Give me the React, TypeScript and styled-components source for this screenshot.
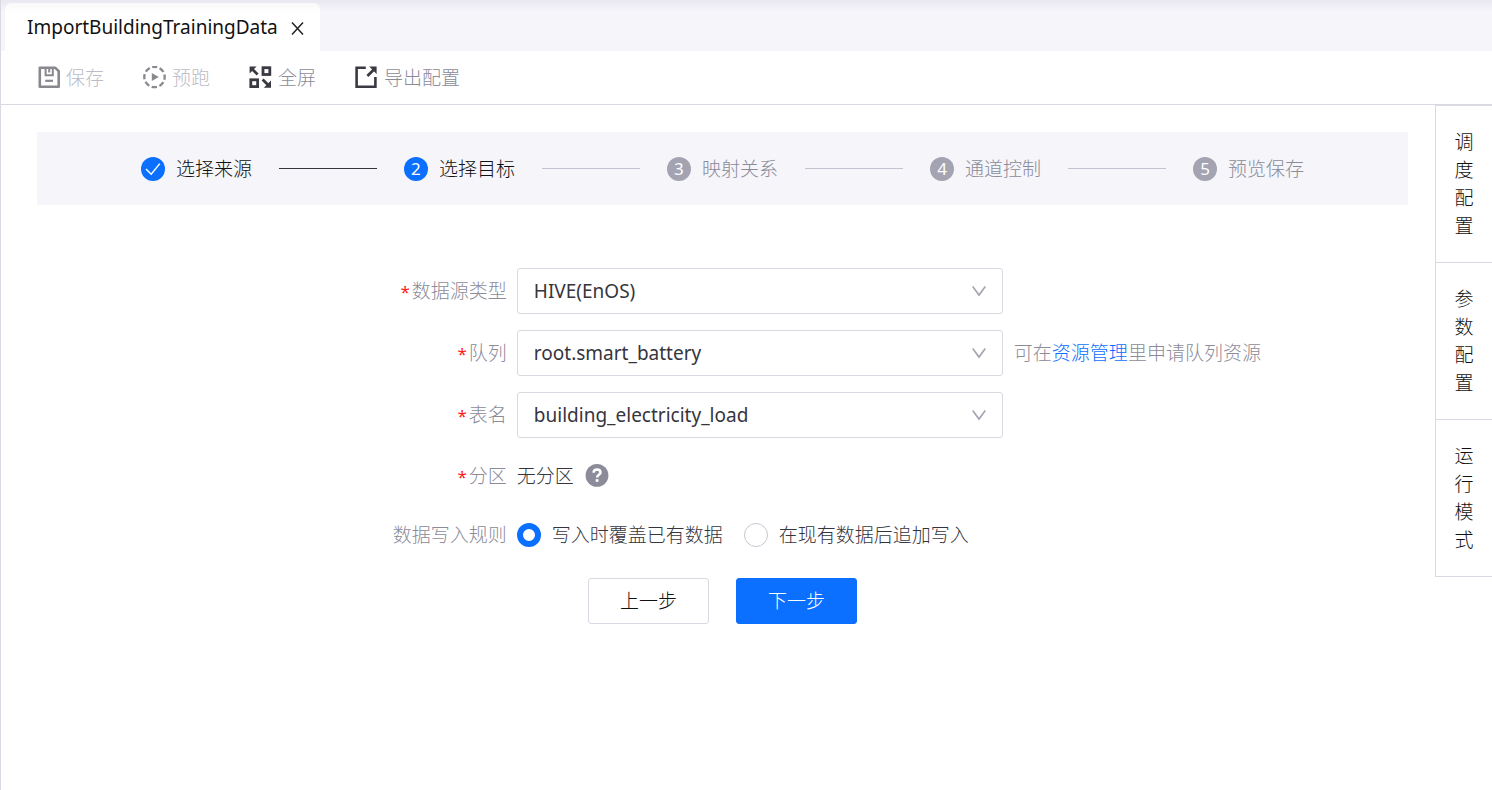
import React, { useState } from 'react';
import styled, { createGlobalStyle } from 'styled-components';

const blue = '#0b6fff';
const line = '#d9d9e2';
const muted = '#8b8b99';
const dark = '#35353d';
const panel = '#f5f5fa';

const GlobalStyle = createGlobalStyle`
  *, *::before, *::after { box-sizing: border-box; }
  body {
    margin: 0;
    background: #fff;
    color: #111;
    font-family: 'Noto Sans', 'Noto Sans CJK SC', sans-serif;
    font-size: 19px;
    line-height: 28px;
    font-weight: 300;
  }
  button, select, input { font: inherit; color: inherit; margin: 0; }
  button { border: 0; padding: 0; background: none; cursor: pointer; }
`;

const Page = styled.div`
  min-height: 100vh;
  display: flex;
  flex-direction: column;
  border-left: 1px solid ${line};
`;

const TabBar = styled.header`
  display: flex;
  align-items: flex-end;
  height: 51px;
  padding-left: 4px;
  background: linear-gradient(#e9e8f0, ${panel} 12px);
`;

const Tab = styled.div`
  display: flex;
  align-items: center;
  gap: 13px;
  height: 48px;
  padding: 0 16px 0 22px;
  border-radius: 6px 6px 0 0;
  background: linear-gradient(#f9f9fb, #fff 10px);
  font-weight: 400;
`;

const CloseButton = styled.button`
  display: flex;
  padding-top: 3px;
`;

const Toolbar = styled.nav`
  display: flex;
  align-items: center;
  gap: 39px;
  height: 54px;
  padding-left: 36px;
  border-bottom: 1px solid ${line};
`;

const Tool = styled.button`
  display: flex;
  align-items: center;
  gap: 6px;
  color: ${muted};
  svg { color: #3a3a42; }
  &:disabled { color: #bcbbc8; cursor: default; }
  &:disabled svg { color: #88888e; }
`;

const Body = styled.div`
  flex: 1;
  display: flex;
  align-items: flex-start;
`;

const Main = styled.main`
  flex: 1;
  min-width: 0;
  padding: 27px 27px 27px 36px;
`;

const Steps = styled.ol`
  display: flex;
  align-items: center;
  justify-content: center;
  gap: 27px;
  height: 73px;
  margin: 0;
  padding: 0;
  list-style: none;
  background: ${panel};
`;

const Step = styled.li<{ $reached: boolean }>`
  display: flex;
  align-items: center;
  gap: 11px;
  white-space: nowrap;
  color: ${p => (p.$reached ? '#111' : muted)};
`;

const StepMark = styled.span<{ $reached: boolean }>`
  display: flex;
  align-items: center;
  justify-content: center;
  width: 24px;
  height: 24px;
  border-radius: 50%;
  background: ${p => (p.$reached ? blue : '#a3a3b1')};
  color: #fff;
  font-size: 17px;
  font-weight: 400;
  line-height: 24px;
`;

const StepLine = styled.li<{ $done: boolean }>`
  width: 98px;
  height: 1px;
  background: ${p => (p.$done ? '#35353d' : '#c3c3d0')};
`;

const Form = styled.form`
  display: flex;
  flex-direction: column;
  gap: 16px;
  padding-top: 63px;
`;

const Row = styled.div`
  display: flex;
  align-items: center;
`;

const LabelCell = styled.div`
  width: 35%;
  padding-right: 10px;
  text-align: right;
  color: ${muted};
`;

const Star = styled.span`
  margin-right: 2px;
  color: #ff1a1a;
  font-size: 17px;
  font-weight: 400;
`;

const SelectBox = styled.div`
  display: grid;
  align-items: center;
  width: 486px;
  > * { grid-area: 1 / 1; }
  svg { justify-self: end; margin-right: 17px; pointer-events: none; }
`;

const Select = styled.select`
  appearance: none;
  width: 100%;
  height: 46px;
  padding: 0 40px 0 16px;
  border: 1px solid ${line};
  border-radius: 3px;
  background: #fff;
  color: ${dark};
  font-weight: 400;
`;

const Hint = styled.span`
  margin-left: 11px;
  color: ${muted};
`;

const Link = styled.a`
  color: ${blue};
  text-decoration: none;
`;

const Value = styled.div`
  display: flex;
  align-items: center;
  gap: 11px;
  height: 44px;
  color: ${dark};
`;

const HelpButton = styled.button`
  display: flex;
`;

const Choices = styled.div`
  display: flex;
  align-items: center;
  gap: 21px;
  height: 42px;
`;

const Choice = styled.label`
  display: flex;
  align-items: center;
  gap: 11px;
  color: ${dark};
  cursor: pointer;
`;

const Radio = styled.input`
  appearance: none;
  width: 24px;
  height: 24px;
  border: 1px solid #c8c8d3;
  border-radius: 50%;
  background: #fff;
  &:checked { border: 6px solid ${blue}; }
`;

const Actions = styled.div`
  display: flex;
  justify-content: center;
  gap: 27px;
  padding-top: 6px;
`;

const ActionButton = styled.button<{ $primary?: boolean }>`
  height: 46px;
  padding: 0 31px;
  border: 1px solid ${p => (p.$primary ? blue : line)};
  border-radius: 3px;
  background: ${p => (p.$primary ? blue : '#fff')};
  color: ${p => (p.$primary ? '#fff' : '#111')};
`;

const Side = styled.aside`
  width: 57px;
  border-left: 1px solid ${line};
  border-top: 1px solid ${line};
`;

const SideButton = styled.button`
  display: block;
  width: 100%;
  padding: 22px 18px;
  border-bottom: 1px solid ${line};
  word-break: break-all;
`;

const SaveIcon = () => (
  <svg width="23" height="23" viewBox="0 0 23 23" fill="none" stroke="currentColor" strokeWidth="2.6" aria-hidden="true">
    <path d="M2.8 1.8H18.3L21.7 5.2V20.8H2.8Z" strokeLinejoin="round" />
    <path d="M8.6 2V9.2H15.8V2M12.2 2.5V6.5" strokeWidth="2" />
    <path d="M8.2 14.8H16" strokeWidth="2.2" />
  </svg>
);

const RunIcon = () => (
  <svg width="23" height="23" viewBox="0 0 23 23" fill="none" aria-hidden="true">
    <circle cx="11.5" cy="11" r="10.2" stroke="currentColor" strokeWidth="2.3" strokeDasharray="5.4 2.61" strokeDashoffset="2.7" transform="rotate(-90 11.5 11)" />
    <path d="M8.8 6.9L15.8 11L8.8 15.1Z" fill="currentColor" />
  </svg>
);

const FullIcon = () => (
  <svg width="23" height="23" viewBox="0 0 23 23" fill="none" stroke="currentColor" strokeWidth="2.8" aria-hidden="true">
    <rect x="14" y="1.7" width="6.8" height="6.8" />
    <rect x="1.8" y="13.8" width="6.8" height="6.8" />
    <path d="M3 3L8.6 8.4M13.6 13.4L19.6 19.4" />
    <path d="M.6 .4H7.6L.6 7.4ZM22 21.8V14.6L14.8 21.8Z" fill="currentColor" stroke="none" />
  </svg>
);

const ExportIcon = () => (
  <svg width="23" height="23" viewBox="0 0 23 23" fill="none" stroke="currentColor" strokeWidth="2.6" aria-hidden="true">
    <path d="M10.8 1.8H1.6V20.8H20.4V11" />
    <path d="M12.4 10L19.4 3" strokeWidth="2.8" />
    <path d="M14.2 .5H21.6V8Z" fill="currentColor" stroke="none" />
  </svg>
);

const CloseIcon = () => (
  <svg width="13" height="13" viewBox="0 0 13 13" stroke="#222" strokeWidth="1.5" aria-hidden="true">
    <path d="M1 .5L12 12.5M12 .5L1 12.5" />
  </svg>
);

const ChevronIcon = () => (
  <svg width="14" height="11" viewBox="0 0 14 11" fill="none" stroke="#a3a3b1" strokeWidth="1.6" aria-hidden="true">
    <path d="M.7 .6L7 9.1L13.3 .6" />
  </svg>
);

const CheckIcon = () => (
  <svg width="16" height="14" viewBox="0 0 16 14" fill="none" stroke="#fff" strokeWidth="1.5" aria-hidden="true">
    <path d="M1 7L6.2 12.2L14.8 1.6" />
  </svg>
);

const HelpIcon = () => (
  <svg width="24" height="24" viewBox="0 0 24 24" fill="none" aria-hidden="true">
    <circle cx="12" cy="11.4" r="11.4" fill="#8b8b99" />
    <path d="M8.6 8.8C8.6 6.6 10 5.5 12 5.5S15.5 6.7 15.5 8.5C15.5 10.8 12.1 10.9 12.1 13.6" stroke="#fff" strokeWidth="2.5" />
    <rect x="10.7" y="15.2" width="2.8" height="2.6" fill="#fff" />
  </svg>
);

const steps = ['选择来源', '选择目标', '映射关系', '通道控制', '预览保存'];
const current = 1;

const fields = [
  { id: 'type', label: '数据源类型', value: 'HIVE(EnOS)' },
  { id: 'queue', label: '队列', value: 'root.smart_battery' },
  { id: 'table', label: '表名', value: 'building_electricity_load' },
];

const rules = ['写入时覆盖已有数据', '在现有数据后追加写入'];

export default function App() {
  const [rule, setRule] = useState(0);
  return (
    <>
      <GlobalStyle />
      <Page>
        <TabBar>
          <Tab>
            ImportBuildingTrainingData
            <CloseButton type="button" aria-label="关闭"><CloseIcon /></CloseButton>
          </Tab>
        </TabBar>
        <Toolbar>
          <Tool type="button" disabled><SaveIcon />保存</Tool>
          <Tool type="button" disabled><RunIcon />预跑</Tool>
          <Tool type="button"><FullIcon />全屏</Tool>
          <Tool type="button"><ExportIcon />导出配置</Tool>
        </Toolbar>
        <Body>
          <Main>
            <Steps>
              {steps.map((name, i) => (
                <React.Fragment key={name}>
                  {i > 0 && <StepLine $done={i <= current} aria-hidden="true" />}
                  <Step $reached={i <= current}>
                    <StepMark $reached={i <= current}>{i < current ? <CheckIcon /> : i + 1}</StepMark>
                    {name}
                  </Step>
                </React.Fragment>
              ))}
            </Steps>
            <Form onSubmit={e => e.preventDefault()}>
              {fields.map(f => (
                <Row key={f.id}>
                  <LabelCell><Star>*</Star><label htmlFor={f.id}>{f.label}</label></LabelCell>
                  <SelectBox>
                    <Select id={f.id} defaultValue={f.value}><option>{f.value}</option></Select>
                    <ChevronIcon />
                  </SelectBox>
                  {f.id === 'queue' && <Hint>可在<Link href="#resources">资源管理</Link>里申请队列资源</Hint>}
                </Row>
              ))}
              <Row>
                <LabelCell><Star>*</Star>分区</LabelCell>
                <Value>无分区<HelpButton type="button" aria-label="帮助"><HelpIcon /></HelpButton></Value>
              </Row>
              <Row role="radiogroup" aria-labelledby="rule-label">
                <LabelCell id="rule-label">数据写入规则</LabelCell>
                <Choices>
                  {rules.map((text, i) => (
                    <Choice key={text}>
                      <Radio type="radio" name="rule" checked={rule === i} onChange={() => setRule(i)} />
                      {text}
                    </Choice>
                  ))}
                </Choices>
              </Row>
              <Actions>
                <ActionButton type="button">上一步</ActionButton>
                <ActionButton type="submit" $primary>下一步</ActionButton>
              </Actions>
            </Form>
          </Main>
          <Side>
            <SideButton type="button">调度配置</SideButton>
            <SideButton type="button">参数配置</SideButton>
            <SideButton type="button">运行模式</SideButton>
          </Side>
        </Body>
      </Page>
    </>
  );
}
